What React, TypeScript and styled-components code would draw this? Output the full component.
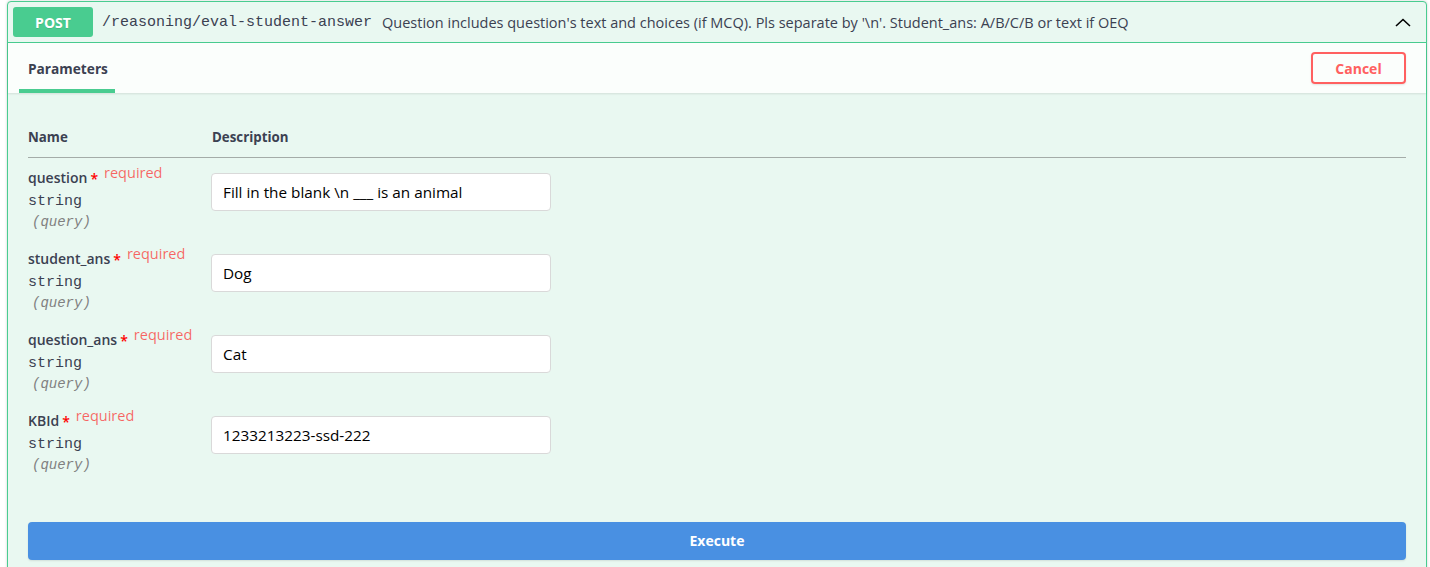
import React from "react";
import styled, { createGlobalStyle } from "styled-components";

const Global = createGlobalStyle`
  html, body { margin: 0; padding: 0; background: #fff; }
  body { font-family: "Open Sans", "Noto Sans", sans-serif; color: #3b4151; }
  * { box-sizing: border-box; }
`;

const Page = styled.div`
  padding: 1px 3px 0 7px;
  height: 567px;
  overflow: hidden;
`;

const OpBlock = styled.div`
  border: 1px solid #49cc90;
  border-radius: 4px;
  background: #e9f8f1;
  box-shadow: 0 0 3px rgba(0, 0, 0, 0.19);
`;

const Summary = styled.div`
  display: flex;
  align-items: center;
  padding: 5px;
  border-bottom: 1px solid #49cc90;
`;

const Method = styled.span`
  width: 80px;
  height: 30px;
  display: flex;
  align-items: center;
  justify-content: center;
  background: #49cc90;
  color: #fff;
  border-radius: 3px;
  font-size: 14px;
  font-weight: 700;
  text-shadow: 0 1px 0 rgba(0, 0, 0, 0.1);
`;

const Path = styled.span`
  font-family: "Liberation Mono", "DejaVu Sans Mono", monospace;
  font-size: 15px;
  color: #3b4151;
  padding: 0 10px 0 9px;
  white-space: nowrap;
`;

const Desc = styled.span`
  flex: 1;
  font-size: 14.5px;
  color: #3b4151;
  white-space: nowrap;
`;

const Chevron = styled.svg`
  width: 20px;
  height: 20px;
  margin-right: 8px;
`;

const SectionHeader = styled.div`
  display: flex;
  align-items: flex-end;
  justify-content: space-between;
  height: 50px;
  padding: 0 20px 0 11px;
  background: rgba(255, 255, 255, 0.8);
  box-shadow: 0 1px 2px rgba(0, 0, 0, 0.1);
`;

const Tab = styled.div`
  width: 96px;
  height: 45px;
  padding: 0 0 4px 9px;
  display: flex;
  align-items: center;
  font-size: 13.7px;
  font-weight: 700;
  color: #3b4151;
  position: relative;
  &::after {
    content: "";
    position: absolute;
    left: 0;
    right: 0;
    bottom: 0;
    height: 4px;
    background: #49cc90;
  }
`;

const CancelButton = styled.button`
  align-self: center;
  width: 95px;
  height: 32px;
  border: 2px solid #ff6060;
  border-radius: 4px;
  background: transparent;
  color: #ff6060;
  font-family: "Open Sans", sans-serif;
  font-size: 14px;
  font-weight: 700;
  box-shadow: 0 1px 2px rgba(0, 0, 0, 0.1);
`;

const Body = styled.div`
  padding: 20px 20px;
`;

const HeaderRow = styled.div`
  display: grid;
  grid-template-columns: 184px 1fr;
  padding: 14px 0 10px;
  border-bottom: 1px solid #a4aca8;
  font-size: 13.3px;
  font-weight: 700;
  line-height: 20px;
`;

const ParamRow = styled.div`
  display: grid;
  grid-template-columns: 183px 1fr;
  height: 81px;
`;

const NameCell = styled.div`
  padding-top: 9px;
`;

const ParamName = styled.div`
  display: flex;
  align-items: flex-start;
  height: 22px;
  font-size: 14px;
  font-weight: 600;
  line-height: 22px;
  color: #3b4151;
`;

const Star = styled.span`
  color: red;
  font-size: 14px;
  margin-left: 3px;
  line-height: 24px;
`;

const Required = styled.span`
  color: rgba(255, 0, 0, 0.6);
  font-size: 14.5px;
  font-weight: 400;
  line-height: 12px;
  margin-left: 6px;
`;

const TypeText = styled.div`
  margin-top: 2px;
  font-family: "Liberation Mono", "DejaVu Sans Mono", monospace;
  font-size: 15px;
  line-height: 22px;
  color: #3b4151;
`;

const InText = styled.div`
  font-family: "Liberation Mono", "DejaVu Sans Mono", monospace;
  font-size: 14px;
  font-style: italic;
  line-height: 19px;
  color: #808080;
  padding-left: 4px;
`;

const DescCell = styled.div`
  padding-top: 15px;
`;

const Input = styled.input`
  width: 340px;
  height: 38px;
  padding: 8px 11px;
  border: 1px solid #d9d9d9;
  border-radius: 4px;
  background: #fff;
  font-family: "Open Sans", sans-serif;
  font-size: 15.3px;
  color: #000;
  outline: none;
`;

const ExecuteButton = styled.button`
  display: block;
  width: 100%;
  height: 38px;
  margin-top: 40px;
  padding-bottom: 2px;
  border: none;
  border-radius: 4px;
  background: #4990e2;
  color: #fff;
  font-family: "Open Sans", sans-serif;
  font-size: 14px;
  font-weight: 700;
  box-shadow: 0 1px 2px rgba(0, 0, 0, 0.1);
`;

const params = [
  { name: "question", value: "Fill in the blank \\n ___ is an animal" },
  { name: "student_ans", value: "Dog" },
  { name: "question_ans", value: "Cat" },
  { name: "KBId", value: "1233213223-ssd-222" },
];

export default function App() {
  return (
    <>
      <Global />
      <Page>
        <OpBlock>
          <Summary>
            <Method>POST</Method>
            <Path>/reasoning/eval-student-answer</Path>
            <Desc>
              Question includes question's text and choices (if MCQ). Pls separate by '\n'. Student_ans: A/B/C/B or text if OEQ
            </Desc>
            <Chevron viewBox="0 0 20 20">
              <polyline points="3,14 10,7.5 17,14" fill="none" stroke="#000" strokeWidth="1.6" />
            </Chevron>
          </Summary>
          <SectionHeader>
            <Tab>Parameters</Tab>
            <CancelButton>Cancel</CancelButton>
          </SectionHeader>
          <Body>
            <HeaderRow>
              <span>Name</span>
              <span>Description</span>
            </HeaderRow>
            {params.map((p) => (
              <ParamRow key={p.name}>
                <NameCell>
                  <ParamName>
                    {p.name}
                    <Star>*</Star>
                    <Required>required</Required>
                  </ParamName>
                  <TypeText>string</TypeText>
                  <InText>(query)</InText>
                </NameCell>
                <DescCell>
                  <Input defaultValue={p.value} />
                </DescCell>
              </ParamRow>
            ))}
            <ExecuteButton>Execute</ExecuteButton>
          </Body>
        </OpBlock>
      </Page>
    </>
  );
}
